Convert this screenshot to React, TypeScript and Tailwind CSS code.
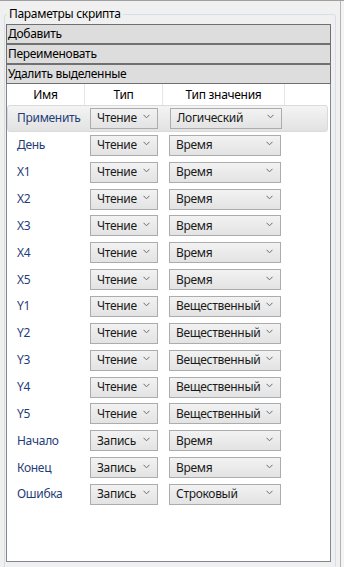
import React from 'react';

const font = "font-['Segoe_UI','Noto_Sans',sans-serif] tracking-[-0.3px]";

type Row = { name: string; access: string; kind: string };

const rows: Row[] = [
  { name: 'День', access: 'Чтение', kind: 'Время' },
  { name: 'X1', access: 'Чтение', kind: 'Время' },
  { name: 'X2', access: 'Чтение', kind: 'Время' },
  { name: 'X3', access: 'Чтение', kind: 'Время' },
  { name: 'X4', access: 'Чтение', kind: 'Время' },
  { name: 'X5', access: 'Чтение', kind: 'Время' },
  { name: 'Y1', access: 'Чтение', kind: 'Вещественный' },
  { name: 'Y2', access: 'Чтение', kind: 'Вещественный' },
  { name: 'Y3', access: 'Чтение', kind: 'Вещественный' },
  { name: 'Y4', access: 'Чтение', kind: 'Вещественный' },
  { name: 'Y5', access: 'Чтение', kind: 'Вещественный' },
  { name: 'Начало', access: 'Запись', kind: 'Время' },
  { name: 'Конец', access: 'Запись', kind: 'Время' },
  { name: 'Ошибка', access: 'Запись', kind: 'Строковый' },
];

const Chevron = () => (
  <svg width="7" height="5" viewBox="0 0 7 5" className="shrink-0 -mt-[3px]">
    <polyline points="0.5,0.8 3.5,3.8 6.5,0.8" fill="none" stroke="#6a6a6a" strokeWidth="1" />
  </svg>
);

const Combo = ({ value, wide }: { value: string; wide?: boolean }) => (
  <div
    className={`h-[21px] ${wide ? 'w-[112px]' : 'w-[68px]'} border border-[#acacac] bg-gradient-to-b from-[#f2f2f2] to-[#e3e3e3] flex items-center justify-between pl-[6px] pr-[7px] text-[12px] leading-none text-[#1a1a1a]`}
  >
    <span>{value}</span>
    <Chevron />
  </div>
);

const GridRow = ({ row, highlight }: { row: Row; highlight?: boolean }) => (
  <div
    className={`h-[26.86px] flex items-center ${
      highlight
        ? 'bg-gradient-to-b from-[#f4f4f4] to-[#e2e2e2] border border-[#dadada] rounded-[3px] mr-[2px]'
        : ''
    }`}
  >
    <div className={`w-[78px] text-[12px] text-[#1f3d78] ${highlight ? 'pl-[9px]' : 'pl-[10px]'}`}>{row.name}</div>
    <div className={`w-[78px] ${highlight ? 'pl-[4px]' : 'pl-[5px]'}`}>
      <Combo value={row.access} />
    </div>
    <div className="w-[122px] pl-[6px]">
      <Combo value={row.kind} wide />
    </div>
  </div>
);

const ActionButton = ({ label }: { label: string }) => (
  <button className="h-[20px] w-full border border-[#707070] bg-[#dddddd] text-left pl-[1px] text-[12px] leading-none text-black">
    {label}
  </button>
);

export default function App() {
  return (
    <div className={`w-[344px] h-[567px] overflow-hidden bg-[#f0f0f0] border-t border-[#a0a0a0] flex ${font}`}>
      <div className="w-[340px] pt-[5px] pl-[4px]">
        <fieldset className="w-[332px] h-[600px] border border-[#d5dfe5] rounded-[3px] pl-[1px] pr-[4px] pt-[2px]">
          <legend className="ml-[1px] px-[2px] text-[12px] leading-[16px] text-black">Параметры скрипта</legend>
          <div className="flex flex-col">
            <ActionButton label="Добавить" />
            <ActionButton label="Переименовать" />
            <ActionButton label="Удалить выделенные" />
          </div>
          <div className="h-[478px] border-x border-b border-[#828790] bg-white flex flex-col">
            <div className="h-[21px] flex text-[12px] text-black">
              <div className="w-[78px] flex items-center justify-center border-r border-[#e6e6e6]">Имя</div>
              <div className="w-[78px] flex items-center justify-center border-r border-[#e6e6e6]">Тип</div>
              <div className="w-[122px] flex items-center justify-center border-r border-[#e6e6e6]">Тип значения</div>
              <div className="flex-1" />
            </div>
            <GridRow row={{ name: 'Применить', access: 'Чтение', kind: 'Логический' }} highlight />
            {rows.map((r) => (
              <GridRow key={r.name} row={r} />
            ))}
          </div>
        </fieldset>
      </div>
      <div className="w-px bg-[#b4b4b4]" />
      <div className="flex-1 bg-[#f4f4f4]" />
    </div>
  );
}
